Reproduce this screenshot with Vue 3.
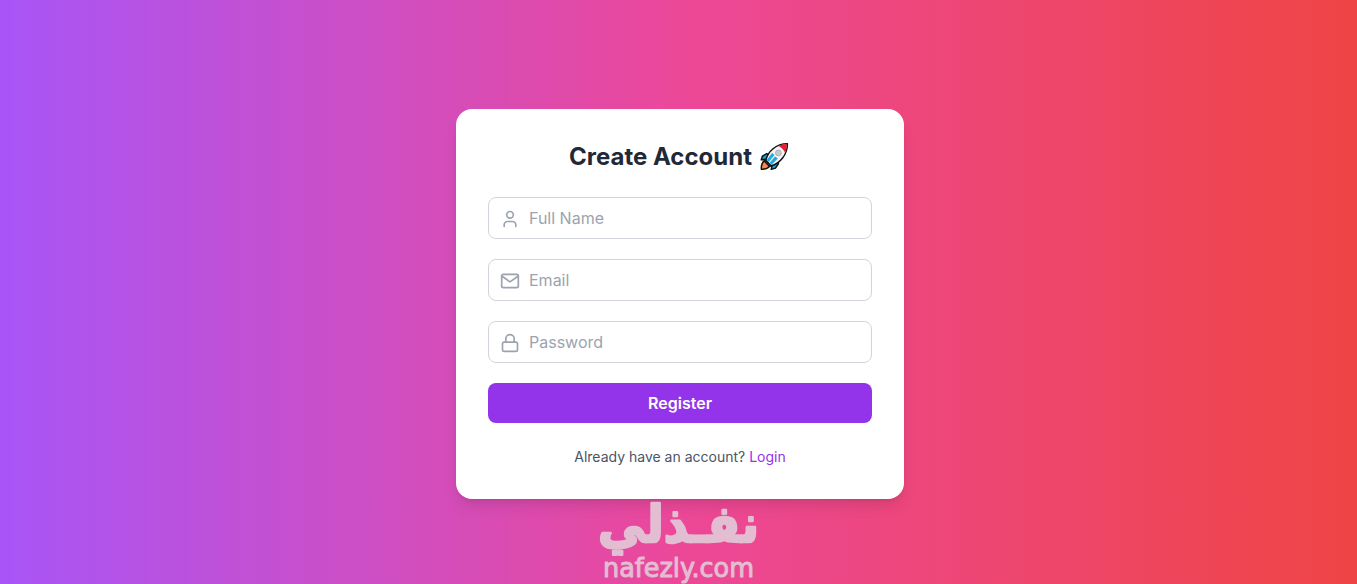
<template>
    <div class="page">
        <div class="card">
            <h2 class="title">
                <span>Create Account</span>
                <svg class="rocket" viewBox="0 0 33 32" role="img" aria-label="rocket">
                    <path d="M8 13L3.500 15.500L2.300 19.500L6.500 18.800L5 22.500L10 26.500L13.500 25.200L12.600 29.300L17 28L20 23.500L19.800 20Z" fill="#0ea5e0" stroke="#111" stroke-width="1.500" stroke-linejoin="round"/>
                    <path d="M5.200 20.500L10.800 26.300C8.500 28.700 5.500 29.300 2.400 29.100C2.200 26 2.700 23 5.200 20.500Z" fill="#f7894a" stroke="#111" stroke-width="1.500" stroke-linejoin="round"/>
                    <path d="M7 20C9 11 17.500 2.700 29.300 2.700C29.500 14 21.500 23.500 12.500 25.600Z" fill="#f4f4f6" stroke="#111" stroke-width="1.500" stroke-linejoin="round"/>
                    <path d="M20 4.800C22.800 3.700 25.800 3.300 28.700 3.300C28.800 6.300 28.300 9.300 27 12.200C25.500 9 23.200 6.600 20 4.800Z" fill="#e81c2e"/>
                    <path d="M8 19.500L13.500 12.500L16 14.500L10 21.800Z" fill="#20a9df"/>
                    <path d="M11 22.500L16.500 16L19.500 18L13 24.500Z" fill="#20a9df"/>
                    <circle cx="20" cy="12.300" r="3" fill="#c7c9cd" stroke="#a1a4aa" stroke-width="0.800"/>
                </svg>
            </h2>

            <form class="form" @submit.prevent>
                <div class="field" v-for="field in fields" :key="field.name">
                    <svg class="icon" viewBox="0 0 24 24">
                        <template v-if="field.name === 'name'">
                            <path d="M19 21v-2a4 4 0 0 0-4-4H9a4 4 0 0 0-4 4v2"/>
                            <circle cx="12" cy="7" r="4"/>
                        </template>
                        <template v-else-if="field.name === 'email'">
                            <rect x="2" y="4" width="20" height="16" rx="2"/>
                            <polyline points="22,6 12,13 2,6"/>
                        </template>
                        <template v-else>
                            <rect x="3" y="11" width="18" height="11" rx="2"/>
                            <path d="M7 11V7a5 5 0 0 1 10 0v4"/>
                        </template>
                    </svg>
                    <input v-model="form[field.name]" :type="field.type" :placeholder="field.label" class="input"/>
                </div>
                <button type="submit" class="button">Register</button>
            </form>

            <p class="footer">Already have an account? <a href="#" class="link">Login</a></p>
        </div>

        <svg class="watermark" viewBox="0 0 180 86">
            <text class="wm-ar" x="8" y="44" textLength="161" lengthAdjust="spacingAndGlyphs">نفـذلي</text>
            <text class="wm-en" x="13" y="79" textLength="151" lengthAdjust="spacingAndGlyphs">nafezly.com</text>
        </svg>
    </div>
</template>

<script setup>
import { reactive } from 'vue'

const form = reactive({ name: '', email: '', password: '' })

const fields = [
    { name: 'name', type: 'text', label: 'Full Name' },
    { name: 'email', type: 'email', label: 'Email' },
    { name: 'password', type: 'password', label: 'Password' },
]
</script>

<style>
html, body {
    overflow: hidden;
}
</style>

<style scoped>
.page {
    position: relative;
    box-sizing: border-box;
    width: 1360px;
    height: 608px;
    display: flex;
    align-items: center;
    justify-content: center;
    background: linear-gradient(to right, #a855f7, #ec4899, #ef4444);
    font-family: Inter, "Liberation Sans", sans-serif;
}
.card {
    box-sizing: border-box;
    width: 448px;
    padding: 32px;
    background: white;
    border-radius: 16px;
    box-shadow: 0 10px 15px -3px rgba(0, 0, 0, 0.1), 0 4px 6px -4px rgba(0, 0, 0, 0.1);
}
.title {
    display: flex;
    justify-content: center;
    gap: 7px;
    margin: 0 0 24px;
    font-size: 24px;
    line-height: 32px;
    font-weight: 700;
    color: #1f2937;
}
.rocket {
    width: 32px;
    height: 31px;
}
.form {
    display: flex;
    flex-direction: column;
    gap: 20px;
}
.field {
    position: relative;
    display: flex;
}
.icon {
    position: absolute;
    left: 12px;
    top: 12px;
    width: 20px;
    height: 20px;
    fill: none;
    stroke: #9ca3af;
    stroke-width: 2;
    stroke-linecap: round;
    stroke-linejoin: round;
}
.input {
    box-sizing: border-box;
    width: 100%;
    height: 42px;
    padding: 8px 16px 8px 40px;
    border: 1px solid #d1d5db;
    border-radius: 8px;
    background: transparent;
    font-family: inherit;
    font-size: 16px;
    line-height: 24px;
    outline: none;
}
.input::placeholder {
    color: #9ca3af;
}
.button {
    height: 40px;
    border: none;
    border-radius: 8px;
    background: #9333ea;
    color: white;
    font-family: inherit;
    font-size: 16px;
    line-height: 24px;
    font-weight: 600;
}
.footer {
    margin: 24px 0 0;
    text-align: center;
    font-size: 14px;
    line-height: 20px;
    color: #4b5563;
}
.link {
    color: #9333ea;
    text-decoration: none;
}
.watermark {
    position: absolute;
    left: 590px;
    top: 498px;
    width: 180px;
    height: 86px;
    overflow: visible;
    fill: #e3bed3;
    stroke: #e3bed3;
    stroke-linejoin: round;
}
.wm-ar {
    font-family: "DejaVu Sans", sans-serif;
    font-size: 51px;
    font-weight: 700;
    stroke-width: 2.5;
}
.wm-en {
    font-family: "DejaVu Sans", sans-serif;
    font-size: 26px;
    stroke-width: 1;
}
</style>
